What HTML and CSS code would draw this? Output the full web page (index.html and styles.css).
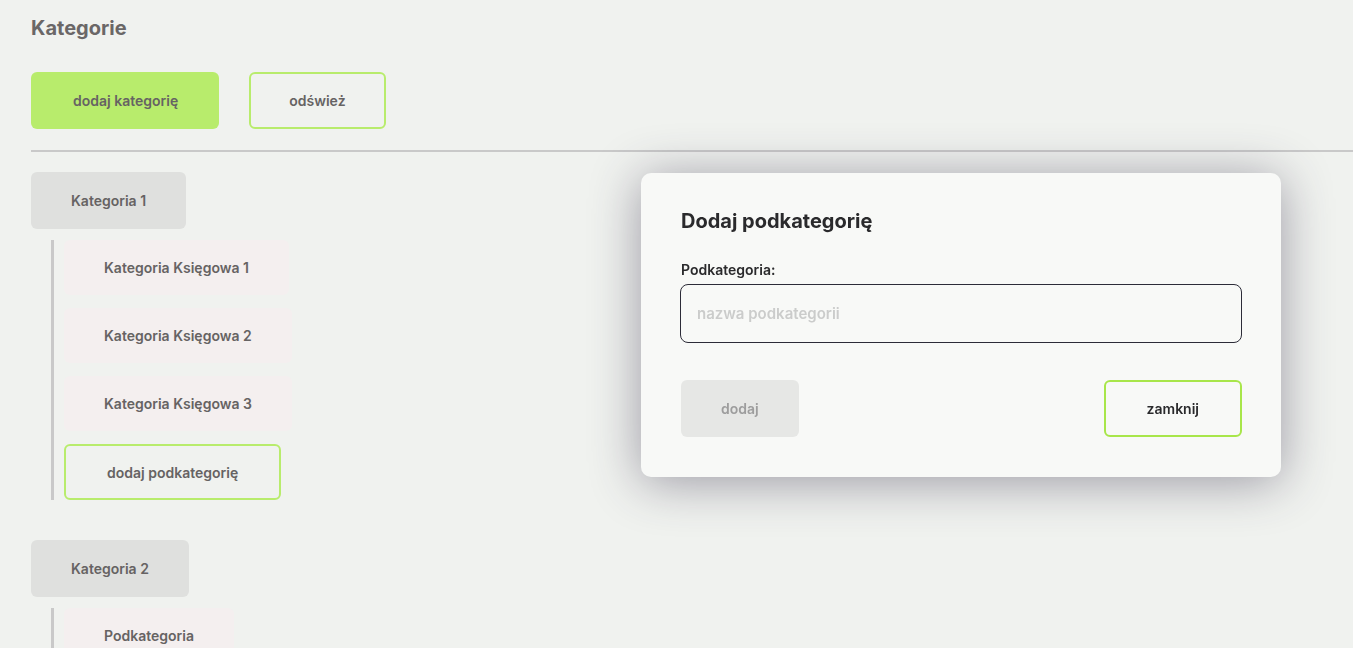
FILE: index.html
```html
<!DOCTYPE html>
<html lang="pl">
<head>
    <meta charset="UTF-8">
    <meta name="viewport" content="width=device-width, initial-scale=1.0">
    <title>Kategorie</title>
    <link rel="stylesheet" href="styles.css">
</head>
<body>
    <div class="page">
        <h1>Kategorie</h1>
        <div class="toolbar">
            <button class="btn btn-green">dodaj kategorię</button>
            <button class="btn btn-outline btn-refresh">odśwież</button>
        </div>
        <hr class="divider">

        <div class="category">
            <div class="category-btn">Kategoria 1</div>
            <div class="sub-list">
                <div class="sub-item">Kategoria Księgowa 1</div>
                <div class="sub-item">Kategoria Księgowa 2</div>
                <div class="sub-item">Kategoria Księgowa 3</div>
                <button class="btn btn-outline btn-sub">dodaj podkategorię</button>
            </div>
        </div>

        <div class="category">
            <div class="category-btn">Kategoria 2</div>
            <div class="sub-list">
                <div class="sub-item">Podkategoria</div>
            </div>
        </div>
    </div>

    <div class="modal">
        <h2>Dodaj podkategorię</h2>
        <label class="modal-label" for="subName">Podkategoria:</label>
        <input type="text" id="subName" class="modal-input" placeholder="nazwa podkategorii">
        <div class="modal-actions">
            <button class="btn btn-disabled">dodaj</button>
            <button class="btn btn-outline btn-dark">zamknij</button>
        </div>
    </div>
</body>
</html>
```

FILE: styles.css
```css
body {
    margin: 0;
    font-family: Inter, Lato, sans-serif;
    background-color: #f0f2ef;
    color: #666363;
    height: 648px;
    overflow: hidden;
}

.page {
    padding: 16px 0 0 31px;
}

h1 {
    margin: 0 0 32px;
    font-size: 20px;
    line-height: 24px;
    font-weight: 700;
    color: #6a6767;
}

.toolbar {
    display: flex;
    gap: 30px;
}

.btn {
    font-family: inherit;
    font-size: 14px;
    font-weight: 600;
    color: #666363;
    height: 57px;
    padding: 0 40px;
    border-radius: 6px;
    border: none;
    background: none;
    cursor: pointer;
}

.btn-green {
    background-color: #b8ec6c;
    padding: 0 41px 0 42px;
}

.btn-outline {
    border: 2px solid #b8ec6c;
}

.btn-refresh {
    padding: 0 38px;
}

.divider {
    margin: 21px 0 20px;
    height: 2px;
    border: none;
    background-color: #c9c9c9;
}

.category + .category {
    margin-top: 40px;
}

.category-btn {
    display: inline-flex;
    align-items: center;
    height: 57px;
    padding: 0 40px;
    border-radius: 6px;
    background-color: #dfe0de;
    font-size: 14px;
    font-weight: 600;
}

.sub-list {
    display: flex;
    flex-direction: column;
    align-items: flex-start;
    gap: 13px;
    margin: 11px 0 0 20px;
    padding-left: 10px;
    border-left: 3px solid #c9c9c9;
}

.sub-item {
    display: flex;
    align-items: center;
    height: 55px;
    padding: 0 40px;
    border-radius: 6px;
    background-color: #f4efef;
    font-size: 14px;
    font-weight: 600;
}

.btn-sub {
    height: 56px;
    padding: 0 41px;
}

.modal {
    position: fixed;
    left: 641px;
    top: 173px;
    width: 640px;
    box-sizing: border-box;
    padding: 36px 39px 40px 39px;
    background-color: #f8f9f7;
    border-radius: 10px;
    box-shadow: 0 5px 50px rgba(50, 45, 70, 0.45);
}

.modal h2 {
    margin: 0 0 28px 1px;
    font-size: 20px;
    line-height: 24px;
    font-weight: 700;
    color: #2a2a2c;
}

.modal-label {
    display: block;
    margin: 0 0 5px 1px;
    font-size: 14px;
    line-height: 18px;
    font-weight: 600;
    color: #2a2a2c;
}

.modal-input {
    display: block;
    width: 100%;
    box-sizing: border-box;
    height: 59px;
    padding: 0 16px;
    border: 1.5px solid #2c2c38;
    border-radius: 8px;
    background: transparent;
    font-family: inherit;
    font-size: 15px;
    font-weight: 600;
}

.modal-input::placeholder {
    color: #cbcccb;
}

.modal-actions {
    display: flex;
    justify-content: space-between;
    margin: 37px 0 0 1px;
}

.btn-disabled {
    background-color: #e6e7e5;
    color: #9d9d9d;
}

.btn-dark {
    color: #2a2a2c;
    border-color: #a8e64a;
    padding: 0 41px;
}
```
